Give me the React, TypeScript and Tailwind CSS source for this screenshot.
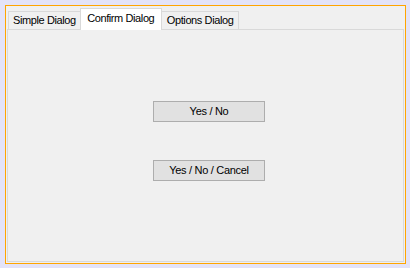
import React, { useState } from "react";

const tabs = ["Simple Dialog", "Confirm Dialog", "Options Dialog"];

const DialogButton = ({ label }: { label: string }) => (
  <button className="w-[112px] h-[21px] border border-[#adadad] bg-[#e1e1e1] text-[11px] tracking-[-0.3px] text-black leading-none">
    {label}
  </button>
);

const App = () => {
  const [active, setActive] = useState(1);

  return (
    <div
      className="w-[410px] h-[268px] bg-[#e3e3f8] pl-[5px] pt-[5px]"
      style={{ fontFamily: '"Liberation Sans", Arial, sans-serif' }}
    >
      <div className="w-[401px] h-[259px] border border-[#ffa500] bg-[#f0f0f0] flex flex-col pl-px pr-px pb-px pt-[2px]">
        <div className="flex items-end h-[21px] pl-px">
          {tabs.map((t, i) =>
            i === active ? (
              <button
                key={t}
                onClick={() => setActive(i)}
                className="h-[22px] -mb-px px-[6.5px] border border-b-0 border-[#d9d9d9] bg-white text-[11px] tracking-[-0.4px] text-black leading-none pb-[3px] relative z-10"
              >
                {t}
              </button>
            ) : (
              <button
                key={t}
                onClick={() => setActive(i)}
                className={
                  "h-[18px] border border-b-0 border-[#d9d9d9] bg-[#f0f0f0] text-[11px] tracking-[-0.4px] text-black leading-none " +
                  (i < active ? "border-r-0 px-[4px]" : "border-l-0 px-[5px]")
                }
              >
                {t}
              </button>
            )
          )}
        </div>
        <div className="flex-1 border border-[#d9d9d9] bg-[#f0f0f0] flex flex-col items-center pl-[7px] pt-[71px] gap-[38px]">
          <DialogButton label="Yes / No" />
          <DialogButton label="Yes / No / Cancel" />
        </div>
      </div>
    </div>
  );
};

export default App;
